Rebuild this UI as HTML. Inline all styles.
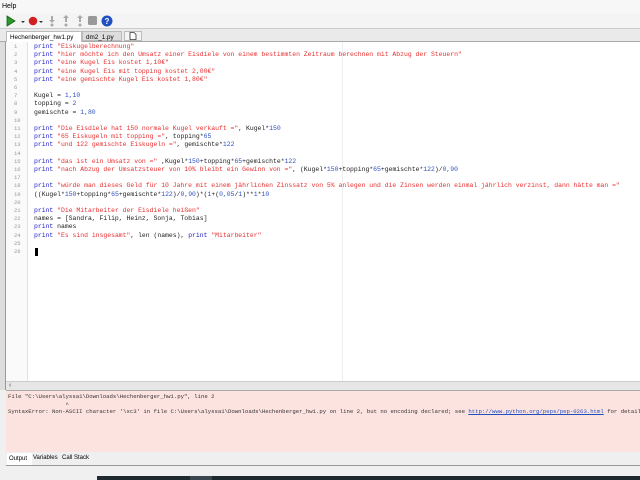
<!DOCTYPE html>
<html><head><meta charset="utf-8"><style>
*{margin:0;padding:0;box-sizing:border-box}
body{width:640px;height:480px;overflow:hidden;background:#f0f0f0;font-family:"Liberation Sans",sans-serif;position:relative}
.abs{position:absolute}
.code{font-family:"Liberation Mono",monospace;font-size:6.43px;line-height:8.2px;white-space:pre;color:#222}
.k{color:#1c1ccc}.s{color:#e83030}.n{color:#3050c0}
.ln{font-family:"Liberation Mono",monospace;font-size:5.5px;line-height:8.2px;color:#999;white-space:pre;text-align:left}
</style></head><body>
<div class="abs" style="left:0;top:0;width:640px;height:13px;background:#f7f7f7;font-size:7px;padding:3px 2px">Help</div>
<div class="abs" style="left:0;top:13px;width:640px;height:16px;background:#f4f4f4;border-bottom:1px solid #ccc"></div>
<svg class="abs" style="left:4px;top:14px" width="110" height="14">
<polygon points="3,2 11,7 3,12" fill="#2a9a2a" stroke="#136013" stroke-width="0.8"/>
<polygon points="17,7 21,7 19,9" fill="#333"/>
<circle cx="29" cy="7" r="4.3" fill="#d02020"/>
<polygon points="35,7 39,7 37,9" fill="#333"/>
<g fill="#aaa"><rect x="47" y="2" width="2" height="5"/><polygon points="45,6 51,6 48,9"/><circle cx="48" cy="11" r="1.5"/>
<rect x="61" y="3" width="2" height="5"/><polygon points="59,4 65,4 62,1"/><circle cx="62" cy="11" r="1.5"/>
<rect x="75" y="3" width="2" height="5"/><polygon points="73,4 79,4 76,1"/><circle cx="76" cy="11" r="1.5"/>
<rect x="84" y="2" width="9" height="9" rx="1.5" fill="#999"/></g>
<circle cx="103" cy="7" r="5.5" fill="#2050c0"/><text x="103" y="10" font-size="8" font-weight="bold" fill="#fff" text-anchor="middle" font-family="Liberation Sans">?</text>
</svg>
<div class="abs" style="left:0;top:29px;width:640px;height:13px;background:#eaeaea;border-bottom:1px solid #aaa"></div>
<div class="abs" style="left:6px;top:31px;width:76px;height:11px;background:#fff;border:1px solid #bbb;border-bottom:none;font-size:6.3px;padding:2px 3px">Hechenberger_hw1.py <span style="color:#bbb">⊗</span></div>
<div class="abs" style="left:82px;top:31px;width:40px;height:10px;background:#ddd;border:1px solid #bbb;font-size:6.3px;padding:2px 3px">dm2_1.py <span style="color:#bbb">⊗</span></div>
<div class="abs" style="left:124px;top:31px;width:18px;height:10px;background:#f4f4f4;border:1px solid #bbb;"></div>
<svg class="abs" style="left:129px;top:32px" width="8" height="8"><path d="M1 .5H5L7 2.5V7.5H1Z" fill="#fff" stroke="#333" stroke-width=".8"/></svg>
<div class="abs" style="left:0;top:42px;width:6px;height:348px;background:#ddd;border-right:1px solid #999"></div>
<div class="abs" style="left:6px;top:42px;width:634px;height:339px;background:#fff"></div>
<div class="abs" style="left:6px;top:42px;width:22px;height:339px;background:#fafafa;border-right:1px solid #e0e0e0"></div>
<div class="abs" style="left:342px;top:42px;width:1px;height:339px;background:#eee"></div>
<div class="abs ln" style="left:14px;top:43px">1
2
3
4
5
6
7
8
9
10
11
12
13
14
15
16
17
18
19
20
21
22
23
24
25
26</div>
<div class="abs code" style="left:34px;top:43px"><span class="k">print</span> <span class="s">"Eiskugelberechnung"</span>
<span class="k">print</span> <span class="s">"hier möchte ich den Umsatz einer Eisdiele von einem bestimmten Zeitraum berechnen mit Abzug der Steuern"</span>
<span class="k">print</span> <span class="s">"eine Kugel Eis kostet 1,10€"</span>
<span class="k">print</span> <span class="s">"eine Kugel Eis mit topping kostet 2,00€"</span>
<span class="k">print</span> <span class="s">"eine gemischte Kugel Eis kostet 1,80€"</span>

Kugel = <span class="n">1,10</span>
topping = <span class="n">2</span>
gemischte = <span class="n">1,80</span>

<span class="k">print</span> <span class="s">"Die Eisdiele hat 150 normale Kugel verkauft ="</span>, Kugel*<span class="n">150</span>
<span class="k">print</span> <span class="s">"65 Eiskugeln mit topping ="</span>, topping*<span class="n">65</span>
<span class="k">print</span> <span class="s">"und 122 gemischte Eiskugeln ="</span>, gemischte*<span class="n">122</span>

<span class="k">print</span> <span class="s">"das ist ein Umsatz von ="</span> ,Kugel*<span class="n">150</span>+topping*<span class="n">65</span>+gemischte*<span class="n">122</span>
<span class="k">print</span> <span class="s">"nach Abzug der Umsatzsteuer von 10% bleibt ein Gewinn von ="</span>, (Kugel*<span class="n">150</span>+topping*<span class="n">65</span>+gemischte*<span class="n">122</span>)/<span class="n">0,90</span>

<span class="k">print</span> <span class="s">"würde man dieses Geld für 10 Jahre mit einem jährlichen Zinssatz von 5% anlegen und die Zinsen werden einmal jährlich verzinst, dann hätte man ="</span>
((Kugel*<span class="n">150</span>+topping*<span class="n">65</span>+gemischte*<span class="n">122</span>)/<span class="n">0,90</span>)*(<span class="n">1</span>+(<span class="n">0,05</span>/<span class="n">1</span>)**<span class="n">1</span>*<span class="n">10</span>

<span class="k">print</span> <span class="s">"Die Mitarbeiter der Eisdiele heißen"</span>
names = [Sandra, Filip, Heinz, Sonja, Tobias]
<span class="k">print</span> names
<span class="k">print</span> <span class="s">"Es sind insgesamt"</span>, len (names), <span class="k">print</span> <span class="s">"Mitarbeiter"</span>

</div>
<div class="abs" style="left:35px;top:248px;width:3px;height:8px;background:#000"></div>
<div class="abs" style="left:6px;top:381px;width:634px;height:10px;background:#e6e6e6;border-top:1px solid #ccc;border-bottom:1px solid #aaa"></div>
<div class="abs" style="left:9px;top:382px;font-size:7px;color:#555">‹</div>
<div class="abs" style="left:6px;top:391px;width:634px;height:61px;background:#fde3e0"></div>
<div class="abs code" style="left:8px;top:393px;font-size:5.65px;line-height:7.5px;color:#333">File "C:\Users\alyssa1\Downloads\Hechenberger_hw1.py", line 2
                 ^
SyntaxError: Non-ASCII character '\xc3' in file C:\Users\alyssa1\Downloads\Hechenberger_hw1.py on line 2, but no encoding declared; see <span style="color:#2050c0;text-decoration:underline">http://www.python.org/peps/pep-0263.html</span> for details</div>
<div class="abs" style="left:6px;top:452px;width:634px;height:14px;background:#efefef;border-bottom:1px solid #999"></div>
<div class="abs" style="left:7px;top:453px;width:25px;height:12px;background:#fff;font-size:6px;padding:3px 2px">Output</div>
<div class="abs" style="left:33px;top:455px;font-size:6px">Variables</div>
<div class="abs" style="left:62px;top:455px;font-size:6px">Call Stack</div>
<div class="abs" style="left:97px;top:476px;width:543px;height:4px;background:#1e2a30"></div>
<div class="abs" style="left:190px;top:476px;width:22px;height:4px;background:#3a4650"></div>
</body></html>
